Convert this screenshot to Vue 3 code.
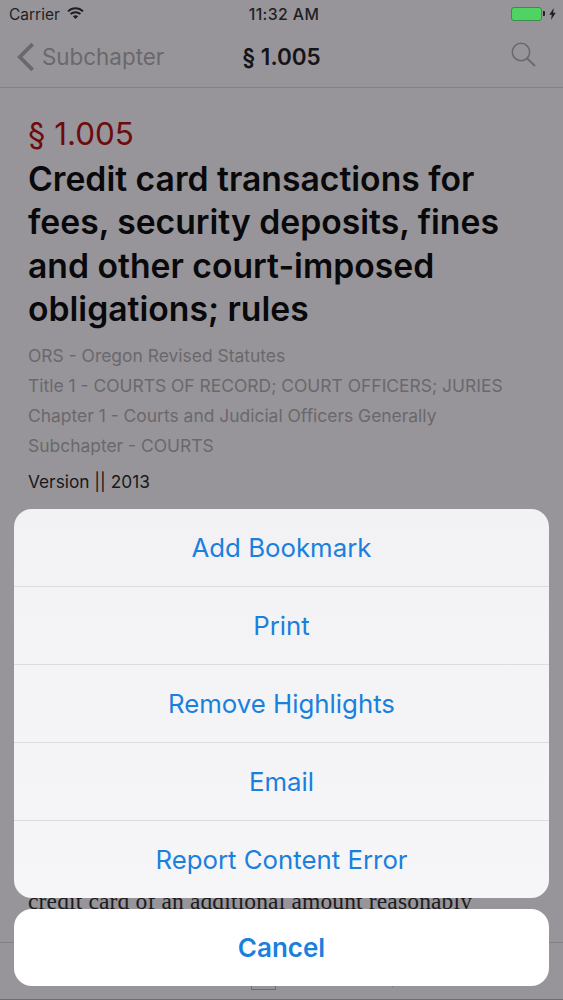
<script setup>
const crumbs = [
  'ORS - Oregon Revised Statutes',
  'Title 1 - COURTS OF RECORD; COURT OFFICERS; JURIES',
  'Chapter 1 - Courts and Judicial Officers Generally',
  'Subchapter - COURTS'
]
const actions = ['Add Bookmark', 'Print', 'Remove Highlights', 'Email', 'Report Content Error']
</script>

<template>
  <div class="page">
    <div class="status">
      <div class="status-left">
        <span>Carrier</span>
        <svg class="wifi" width="17" height="12" viewBox="0 0 17 12">
          <path d="M1 4.4C5.2.2 11.8.2 16 4.4" fill="none" stroke="#1f1e22" stroke-width="2" />
          <path d="M3.6 7.1c2.8-2.6 7-2.6 9.8 0" fill="none" stroke="#1f1e22" stroke-width="2" />
          <path d="M8.5 12 5.8 9.2c1.6-1.3 3.8-1.3 5.4 0z" fill="#1f1e22" />
        </svg>
      </div>
      <div class="clock">11:32 AM</div>
      <div class="status-right">
        <div class="battery"></div>
        <div class="nub"></div>
        <svg class="bolt" width="7" height="12" viewBox="0 0 7 12"><path d="M4.8 0 .3 6.8h2.5L2 12l4.7-7.2H4.1z" fill="#1f1e22" /></svg>
      </div>
    </div>

    <div class="nav">
      <div class="back">
        <svg class="chevron" width="19" height="30" viewBox="0 0 19 30"><path d="M16.6 2.2 3.8 15 16.6 27.8" fill="none" stroke="#6a686c" stroke-width="3.8" /></svg>
        <span>Subchapter</span>
      </div>
      <div class="nav-title">§ 1.005</div>
      <svg class="search" width="25" height="25" viewBox="0 0 25 25">
        <circle cx="10" cy="10" r="8.7" fill="none" stroke="#6b696d" stroke-width="1.5" />
        <path d="m16 16.3 8 7.6" fill="none" stroke="#6b696d" stroke-width="2" />
      </svg>
    </div>

    <div class="article">
      <div class="section">§ 1.005</div>
      <h1 class="title">Credit card transactions for fees, security deposits, fines and other court-imposed obligations; rules</h1>
      <div class="crumbs">
        <div v-for="c in crumbs" :key="c" class="crumb">{{ c }}</div>
      </div>
      <div class="version">Version || 2013</div>
      <p class="body">credit card of an additional amount reasonably</p>
    </div>

    <div class="tabbar">
      <div class="tab-icon"></div>
      <div class="tab-tick"></div>
    </div>

    <div class="sheet">
      <div class="group">
        <div v-for="a in actions" :key="a" class="action">{{ a }}</div>
      </div>
      <div class="cancel">Cancel</div>
    </div>
  </div>
</template>

<style>
html, body { margin: 0; padding: 0; }
</style>

<style scoped>
.page {
  position: relative;
  width: 563px;
  height: 1000px;
  overflow: hidden;
  display: flex;
  flex-direction: column;
  background: #979599;
  font-family: Inter, "Liberation Sans", sans-serif;
  color: #151417;
}
.status {
  height: 29px;
  padding: 0 7px 0 9px;
  display: grid;
  grid-template-columns: 1fr auto 1fr;
  align-items: center;
  font-size: 15.5px;
  color: #1f1e22;
}
.status-left { display: flex; align-items: center; gap: 7px; }
.wifi { margin-top: -3px; }
.clock {
  margin-left: 3px;
  font-size: 15.8px;
  font-weight: 500;
  letter-spacing: .4px;
}
.status-right { display: flex; align-items: center; justify-content: flex-end; margin-top: -2px; }
.battery {
  width: 31px;
  height: 14px;
  box-sizing: border-box;
  border: 1px solid #3f8a4f;
  border-radius: 3px;
  background: #4fd464;
}
.nub { width: 1.5px; height: 5px; margin-left: 1px; background: #1f1e22; border-radius: 0 1px 1px 0; }
.bolt { margin-left: 4.5px; }
.nav {
  height: 59px;
  box-sizing: border-box;
  padding: 0 27px 4px 16px;
  border-bottom: 1px solid #838185;
  display: flex;
  align-items: center;
  justify-content: space-between;
  position: relative;
}
.back {
  display: flex;
  align-items: center;
  gap: 7px;
  font-size: 22.4px;
  color: #6a686c;
}
.chevron { margin-top: 2px; }
.nav-title {
  position: absolute;
  left: 0;
  right: 0;
  text-align: center;
  font-size: 22.5px;
  font-weight: 600;
  color: #151417;
  pointer-events: none;
}
.search { margin-top: -3px; position: relative; }
.article {
  flex: 1;
  min-height: 0;
  padding: 28px 28px 0;
  display: flex;
  flex-direction: column;
  overflow: hidden;
}
.section {
  font-size: 31.4px;
  line-height: 36px;
  color: #6d0b0d;
}
.title {
  margin: 5px 0 0;
  font-size: 33.7px;
  line-height: 43.4px;
  font-weight: 600;
  color: #09090b;
}
.crumbs {
  margin-top: 10.4px;
  font-size: 17.45px;
  line-height: 30px;
  color: #6a686c;
}
.crumb { white-space: nowrap; }
.version {
  margin-top: 6px;
  font-size: 17.3px;
  line-height: 30px;
  color: #19181b;
}
.body {
  margin: auto 0 0;
  padding-bottom: 29px;
  font-family: "Liberation Serif", serif;
  font-size: 23.5px;
  letter-spacing: .15px;
  line-height: 24px;
  color: #1c1b1e;
  white-space: nowrap;
}
.tabbar {
  height: 58px;
  padding-left: 251px;
  border-top: 1px solid #838185;
  border-bottom: 1px solid #6f6d71;
  box-sizing: border-box;
  display: flex;
  align-items: flex-start;
}
.tab-icon {
  width: 25px;
  height: 47px;
  box-sizing: border-box;
  border: 1px solid #6f6d71;
}
.tab-tick {
  width: 1px;
  height: 45px;
  margin-left: 116px;
  background: #838185;
}
.sheet {
  position: absolute;
  left: 14px;
  right: 14px;
  top: 509px;
  display: flex;
  flex-direction: column;
  gap: 11px;
}
.group {
  background: linear-gradient(#f2f2f4, #f6f6f8);
  border-radius: 18px;
  overflow: hidden;
}
.action {
  height: 78px;
  box-sizing: border-box;
  display: flex;
  align-items: center;
  justify-content: center;
  font-size: 25.8px;
  color: #1a80de;
  border-top: 1px solid #dcdcde;
}
.action:first-child { border-top: 0; height: 77px; }
.cancel {
  height: 77px;
  border-radius: 18px;
  background: #fff;
  display: flex;
  align-items: center;
  justify-content: center;
  font-size: 26px;
  font-weight: 600;
  color: #1a80de;
}
</style>
